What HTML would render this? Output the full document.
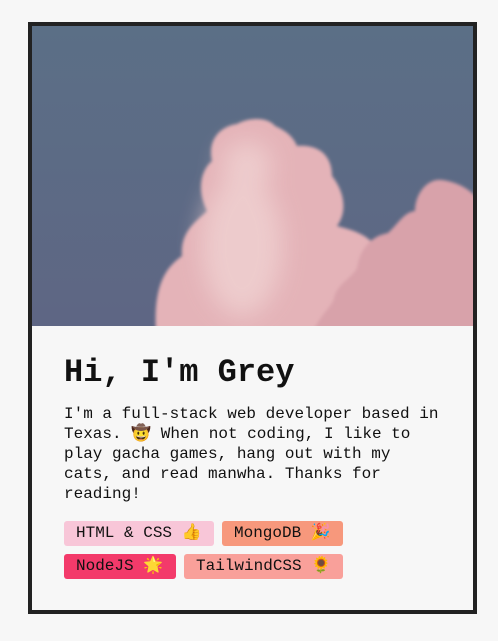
<!DOCTYPE html>
<html><head><meta charset="utf-8"><style>
html,body{margin:0;padding:0;background:#f7f7f7;width:498px;height:641px;overflow:hidden}
.card{position:absolute;left:28px;top:22px;width:441px;height:584px;border:4px solid #222;background:#f7f7f7}
.img{position:absolute;left:0;top:0;width:441px;height:300px;overflow:hidden}
.body{position:absolute;left:32px;top:324px;font-family:"Liberation Mono",monospace;color:#111}
h1{margin:0;position:absolute;top:3px;left:0;font-size:32px;font-weight:bold;white-space:nowrap;line-height:40px}
p{margin:0;position:absolute;top:54px;left:0;width:379px;font-size:16px;line-height:20px}
.tag{position:absolute;height:25px;border-radius:3px;font-size:16px;line-height:25px;padding:0 12px;white-space:nowrap;box-sizing:border-box}
</style></head><body>
<div class="card">
<div class="img"><svg width="441" height="300" viewBox="0 0 441 300">
<defs><linearGradient id="sky" x1="0" y1="0" x2="0" y2="1"><stop offset="0" stop-color="#5b6f86"/><stop offset="1" stop-color="#5e6684"/></linearGradient>
<filter id="b" x="-20%" y="-20%" width="140%" height="140%"><feGaussianBlur stdDeviation="1.5"/></filter>
<filter id="b2" x="-50%" y="-50%" width="200%" height="200%"><feGaussianBlur stdDeviation="12"/></filter></defs>
<rect width="441" height="300" fill="url(#sky)"/>
<path filter="url(#b)" fill="#e4b3b8" d="M 125 320 C 120 270 128 245 150 230 C 148 205 165 195 175 185 C 165 165 168 145 180 135 C 175 112 190 100 205 98 C 215 92 235 90 243 100 C 255 105 262 112 265 120 C 285 118 300 128 300 150 C 312 165 316 185 305 200 C 325 205 345 212 345 230 L 345 320 Z"/>
<g filter="url(#b2)" fill="#f0d2d2" opacity=".8"><ellipse cx="210" cy="220" rx="40" ry="70"/><ellipse cx="215" cy="140" rx="25" ry="25"/></g>
<path filter="url(#b)" fill="#d8a2aa" d="M 275 320 C 286 288 300 282 302 272 C 305 258 320 252 325 242 C 328 222 340 210 356 207 C 366 198 372 186 383 185 C 383 168 395 152 410 154 C 428 156 445 168 445 175 L 445 320 Z"/>
</svg></div>
<div class="body">
<h1>Hi, I'm Grey</h1>
<p>I'm a full-stack web developer based in Texas. 🤠 When not coding, I like to play gacha games, hang out with my cats, and read manwha. Thanks for reading!</p>
<div class="tag" style="left:0;top:171px;width:150px;background:#f8c6d8">HTML &amp; CSS 👍</div>
<div class="tag" style="left:158px;top:171px;width:121px;background:#f7987c">MongoDB 🎉</div>
<div class="tag" style="left:0;top:204px;width:112px;background:#f33a6a">NodeJS 🌟</div>
<div class="tag" style="left:120px;top:204px;width:159px;background:#f9a09a">TailwindCSS 🌻</div>
</div>
</div>
</body></html>
